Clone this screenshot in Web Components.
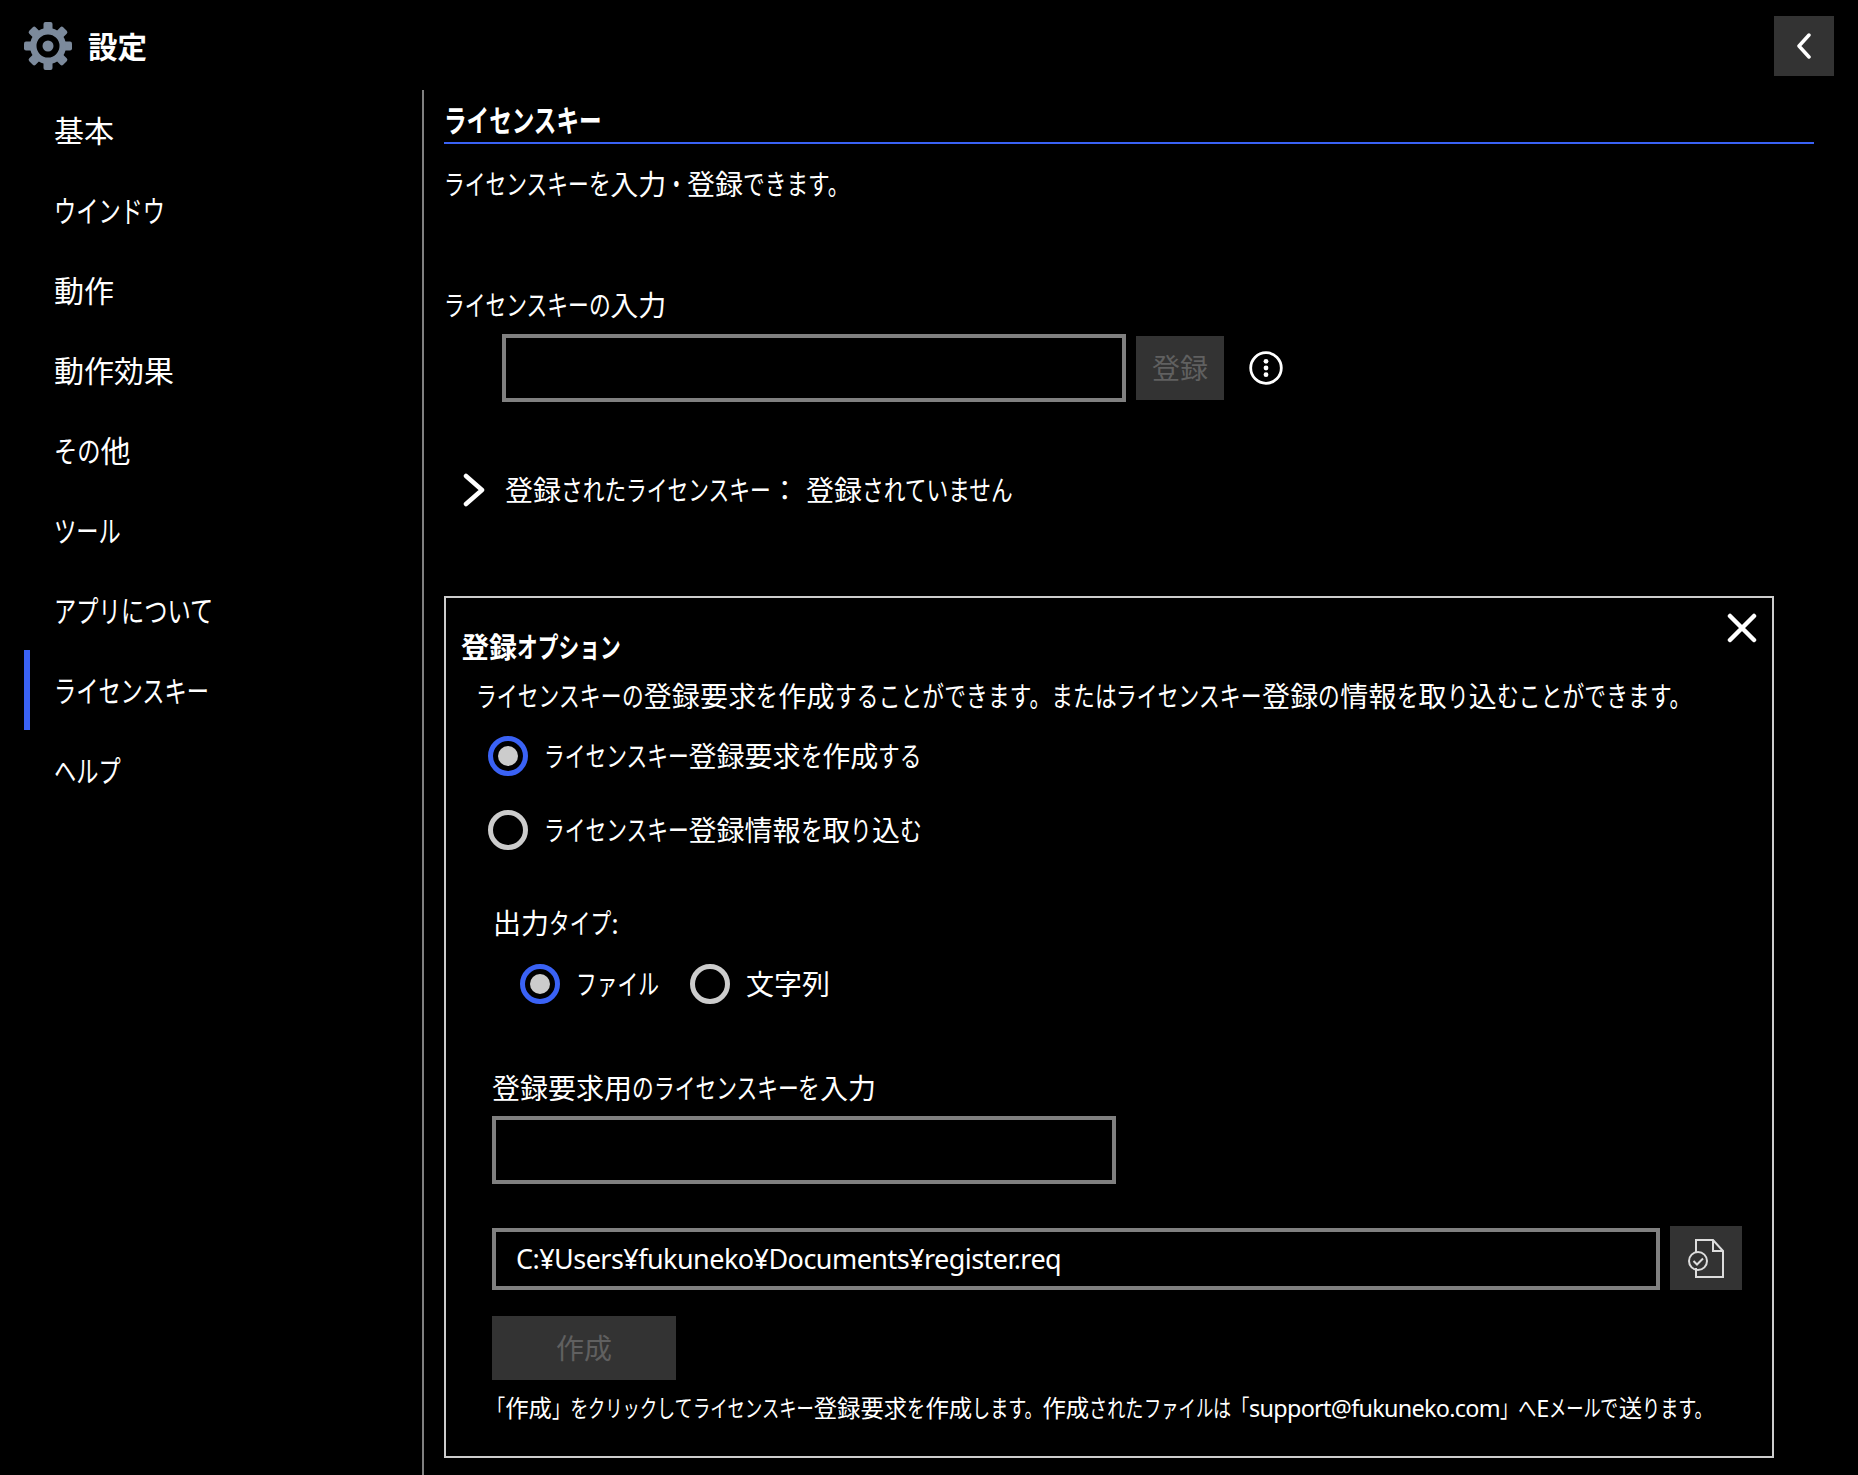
<!DOCTYPE html>
<html lang="ja">
<head>
<meta charset="utf-8">
<title>設定</title>
<style>
  html, body { margin: 0; background: #000; }
  body { color: #fff; font: 400 28px/40px "Noto Sans", "Noto Sans CJK JP", sans-serif; }
</style>
</head>
<body>
<settings-page></settings-page>

<script>
// kana in the original font are condensed, so each kana run gets squeezed
const RUNS = /([\u30a0-\u30ff]+|[\u3040-\u309f\u3002\u300c\u300d]+|[\x21-\x7e]+)/;

class JpText extends HTMLElement {
  constructor() {
    super();
    this.attachShadow({ mode: 'open' });
  }
  connectedCallback() {
    const parts = this.textContent.split(RUNS).filter(Boolean);
    this.shadowRoot.innerHTML = '<style>:host { display: block; white-space: pre; } .k, .h { display: inline-block; transform: scaleX(var(--s)); transform-origin: 0 50%; margin-right: calc(var(--n) * (var(--s) - 1) * 1em); } .k { --s: .74; } .h { --s: .775; } .a { letter-spacing: -.03em; }</style>';
    parts.forEach(p => {
      const span = document.createElement('span');
      span.textContent = p;
      if (/^[\u30a0-\u30ff]/.test(p)) span.className = 'k';
      else if (/^[\u3040-\u309f\u3002\u300c\u300d]/.test(p)) span.className = 'h';
      else if (/^[\x21-\x7e]/.test(p)) span.className = 'a';
      span.style.setProperty('--n', p.length);
      this.shadowRoot.appendChild(span);
    });
  }
}

class NavItem extends HTMLElement {
  constructor() {
    super();
    this.attachShadow({ mode: 'open' });
    this.shadowRoot.innerHTML = `
      <style>
        :host { display: flex; align-items: center; box-sizing: border-box; height: 80px; margin-left: 24px; padding: 2px 0 0 24px; border-left: 6px solid transparent; font-size: 30px; }
        :host([active]) { border-left-color: #3a62f5; }
      </style>
      <slot></slot>`;
  }
}

class TextBox extends HTMLElement {
  constructor() {
    super();
    this.attachShadow({ mode: 'open' });
    this.shadowRoot.innerHTML = `
      <style>
        :host { display: flex; align-items: center; box-sizing: border-box; border: 4px solid #808080; padding-left: 20px; font-size: 27px; letter-spacing: -.55px; }
      </style>
      <slot></slot>`;
  }
}

class GreyButton extends HTMLElement {
  constructor() {
    super();
    this.attachShadow({ mode: 'open' });
    this.shadowRoot.innerHTML = `
      <style>
        :host { display: flex; align-items: center; justify-content: center; height: 64px; background: #333; color: #606060; flex: none; }
      </style>
      <slot></slot>`;
  }
}

class RadioOption extends HTMLElement {
  constructor() {
    super();
    this.attachShadow({ mode: 'open' });
    this.shadowRoot.innerHTML = `
      <style>
        :host { display: flex; align-items: center; gap: 16px; height: 40px; }
        .ring { box-sizing: border-box; width: 40px; height: 40px; border-radius: 50%; border: 5px solid #ccc; display: flex; align-items: center; justify-content: center; flex: none; }
        :host([checked]) .ring { border-color: #3a62f5; }
        :host([checked]) .ring::after { content: ""; width: 20px; height: 20px; border-radius: 50%; background: #ccc; }
      </style>
      <span class="ring"></span>
      <slot></slot>`;
  }
}

class OptionPanel extends HTMLElement {
  constructor() {
    super();
    this.attachShadow({ mode: 'open' });
    this.shadowRoot.innerHTML = `
      <style>
        :host { display: block; position: relative; box-sizing: border-box; width: 1330px; height: 862px; border: 2px solid #ccc; }
        .close { position: absolute; top: 15px; right: 15px; width: 30px; height: 30px; }
        .title { margin: 29px 0 0 15px; font-weight: 700; }
        .desc { margin: 9px 0 0 30px; letter-spacing: .18px; }
        .r1 { margin: 20px 0 0 42px; }
        .r2 { margin: 34px 0 0 42px; }
        .type { margin: 53px 0 0 47px; }
        .types { display: flex; margin: 21px 0 0 74px; gap: 31px; }
        .label { margin: 64px 0 0 46px; }
        .key { margin: 8px 0 0 46px; width: 624px; height: 68px; }
        .path { display: flex; align-items: flex-end; gap: 10px; margin: 42px 0 0 46px; }
        .path text-box { width: 1168px; height: 62px; }
        .path grey-button { width: 72px; }
        .make { margin: 26px 0 0 46px; width: 184px; }
        .foot { margin: 8px 0 0 41px; font-size: 23.4px; }
      </style>
      <svg class="close" viewBox="0 0 30 30" fill="none" stroke="#fff" stroke-width="4.5" stroke-linecap="round"><path d="M3 3 27 27M27 3 3 27"/></svg>
      <jp-text class="title">登録オプション</jp-text>
      <jp-text class="desc">ライセンスキーの登録要求を作成することができます。またはライセンスキー登録の情報を取り込むことができます。</jp-text>
      <radio-option class="r1" checked><jp-text>ライセンスキー登録要求を作成する</jp-text></radio-option>
      <radio-option class="r2"><jp-text>ライセンスキー登録情報を取り込む</jp-text></radio-option>
      <jp-text class="type">出力タイプ:</jp-text>
      <div class="types">
        <radio-option checked><jp-text>ファイル</jp-text></radio-option>
        <radio-option><jp-text>文字列</jp-text></radio-option>
      </div>
      <jp-text class="label">登録要求用のライセンスキーを入力</jp-text>
      <text-box class="key"></text-box>
      <div class="path">
        <text-box>C:¥Users¥fukuneko¥Documents¥register.req</text-box>
        <grey-button>
          <svg width="36" height="40" viewBox="0 0 36 40" fill="none" stroke="#ddd" stroke-width="2">
            <path d="M8 14V2H25L35 13V39H8V30"/>
            <path d="M25 2V13H35"/>
            <circle cx="10" cy="23" r="9"/>
            <path d="M5.5 23 9 26.5 15 20.5"/>
          </svg>
        </grey-button>
      </div>
      <grey-button class="make"><jp-text>作成</jp-text></grey-button>
      <jp-text class="foot">「作成」をクリックしてライセンスキー登録要求を作成します。作成されたファイルは「support@fukuneko.com」へEメールで送ります。</jp-text>`;
  }
}

class SettingsPage extends HTMLElement {
  constructor() {
    super();
    this.attachShadow({ mode: 'open' });
    const teeth = [0, 45, 90, 135, 180, 225, 270, 315]
      .map(a => `<rect x="19.5" y="0" width="9" height="12" rx="2" transform="rotate(${a} 24 24)"/>`).join('');
    this.shadowRoot.innerHTML = `
      <style>
        :host { display: block; height: 1475px; overflow: hidden; }
        header { display: flex; align-items: flex-start; height: 90px; }
        .gear { margin: 22px 16px 0 24px; }
        .app { margin-top: 27px; font-weight: 700; font-size: 29.5px; }
        .back { margin: 16px 24px 0 auto; width: 60px; height: 60px; background: #333; display: flex; align-items: center; justify-content: center; }
        .cols { display: grid; grid-template-columns: 424px 1fr; height: 1385px; }
        nav { border-right: 2px solid #808080; }
        main { padding: 0 44px 0 20px; }
        .head { height: 52px; border-bottom: 2px solid #3a62f5; display: flex; align-items: flex-end; font-weight: 700; font-size: 30.5px; }
        .head jp-text { margin-bottom: 2px; }
        .intro { margin-top: 20px; }
        .lab { margin-top: 81px; }
        .row { display: flex; align-items: center; margin: 9px 0 0 58px; }
        .row text-box { width: 624px; height: 68px; }
        .row grey-button { width: 88px; margin-left: 10px; }
        .info { margin-left: 25px; }
        .exp { display: flex; align-items: center; margin: 68px 0 0 19px; height: 40px; }
        .exp svg { margin-right: 19px; }
        option-panel { margin-top: 86px; }
      </style>
      <header>
        <svg class="gear" width="48" height="48" viewBox="0 0 48 48" fill="#7c8a9c">${teeth}<path fill-rule="evenodd" d="M24 6a18 18 0 1 1 0 36a18 18 0 1 1 0-36ZM24 12.5a11.500 11.500 0 1 0 0 23a11.500 11.500 0 1 0 0-23Z"/><circle cx="24" cy="24" r="5.500"/></svg>
        <jp-text class="app">設定</jp-text>
        <div class="back"><svg width="14" height="26" viewBox="0 0 14 26" fill="none" stroke="#fff" stroke-width="3.5" stroke-linecap="round" stroke-linejoin="round"><path d="M12 2 2 13 12 24"/></svg></div>
      </header>
      <div class="cols">
        <nav>
          <nav-item><jp-text>基本</jp-text></nav-item>
          <nav-item><jp-text>ウインドウ</jp-text></nav-item>
          <nav-item><jp-text>動作</jp-text></nav-item>
          <nav-item><jp-text>動作効果</jp-text></nav-item>
          <nav-item><jp-text>その他</jp-text></nav-item>
          <nav-item><jp-text>ツール</jp-text></nav-item>
          <nav-item><jp-text>アプリについて</jp-text></nav-item>
          <nav-item active><jp-text>ライセンスキー</jp-text></nav-item>
          <nav-item><jp-text>ヘルプ</jp-text></nav-item>
        </nav>
        <main>
          <div class="head"><jp-text>ライセンスキー</jp-text></div>
          <jp-text class="intro">ライセンスキーを入力・登録できます。</jp-text>
          <jp-text class="lab">ライセンスキーの入力</jp-text>
          <div class="row">
            <text-box></text-box>
            <grey-button><jp-text>登録</jp-text></grey-button>
            <svg class="info" width="34" height="34" viewBox="0 0 34 34" fill="#fff"><circle cx="17" cy="17" r="15.300" fill="none" stroke="#fff" stroke-width="2.800"/><circle cx="17" cy="10.300" r="2.400"/><circle cx="17" cy="17" r="2.400"/><circle cx="17" cy="23.700" r="2.400"/></svg>
          </div>
          <div class="exp">
            <svg width="23" height="34" viewBox="0 0 23 34" fill="none" stroke="#fff" stroke-width="4.500" stroke-linecap="round" stroke-linejoin="round"><path d="M3 3 19 17 3 31"/></svg>
            <jp-text>登録されたライセンスキー： 登録されていません</jp-text>
          </div>
          <option-panel></option-panel>
        </main>
      </div>`;
  }
}

customElements.define('jp-text', JpText);
customElements.define('nav-item', NavItem);
customElements.define('text-box', TextBox);
customElements.define('grey-button', GreyButton);
customElements.define('radio-option', RadioOption);
customElements.define('option-panel', OptionPanel);
customElements.define('settings-page', SettingsPage);
</script>
</body>
</html>
